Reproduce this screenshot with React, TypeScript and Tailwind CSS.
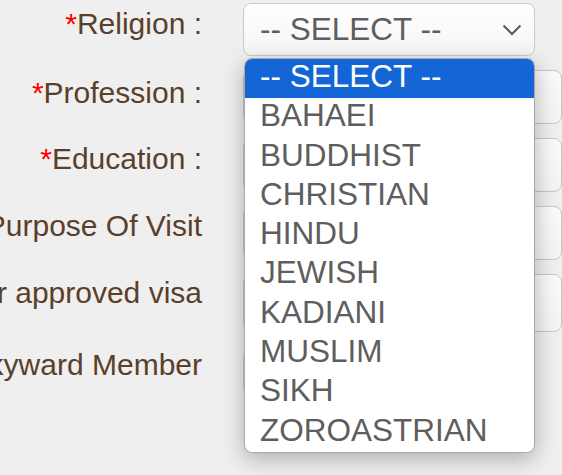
import React from "react";

type Row = {
  label: string;
  required?: boolean;
  labelPt: string;
  height: string;
  width: string;
  kind: "select" | "input" | "short";
};

const rows: Row[] = [
  { label: "Religion :", required: true, labelPt: "pt-[6px]", height: "h-[53px]", width: "w-[292px]", kind: "select" },
  { label: "Profession :", required: true, labelPt: "pt-[8px]", height: "h-[54px]", width: "w-[360px]", kind: "input" },
  { label: "Education :", required: true, labelPt: "pt-[6px]", height: "h-[54px]", width: "w-[360px]", kind: "input" },
  { label: "Purpose Of Visit", labelPt: "pt-[5px]", height: "h-[54px]", width: "w-[360px]", kind: "input" },
  { label: "Prior approved visa", labelPt: "pt-[4px]", height: "h-[58px]", width: "w-[360px]", kind: "input" },
  { label: "Are you a Skyward Member", labelPt: "pt-[2px]", height: "h-[47px]", width: "w-[230px]", kind: "short" },
];

const religions = [
  "-- SELECT --",
  "BAHAEI",
  "BUDDHIST",
  "CHRISTIAN",
  "HINDU",
  "JEWISH",
  "KADIANI",
  "MUSLIM",
  "SIKH",
  "ZOROASTRIAN",
];

function Chevron() {
  return (
    <svg width="20" height="12" viewBox="0 0 20 12" fill="none" className="shrink-0">
      <path d="M1.5 1.5 L10 10 L18.5 1.5" stroke="#5a5a5a" strokeWidth="2" />
    </svg>
  );
}

function Field({ row }: { row: Row }) {
  if (row.kind === "select") {
    return (
      <div
        className={`${row.width} ${row.height} flex items-center justify-between rounded-[8px] border border-[#c9c9c9] bg-gradient-to-b from-white to-[#f5f5f5] pl-[16px] pr-[12px] text-[31.5px] leading-none text-[#5e5e5e]`}
      >
        <span className="pt-[1px]">-- SELECT --</span>
        <Chevron />
      </div>
    );
  }
  return (
    <div
      className={`${row.width} ${row.height} rounded-[8px] border border-[#c6c6c6] bg-gradient-to-b from-[#fafafa] to-[#f3f3f3]`}
    />
  );
}

export default function App() {
  return (
    <div
      className="relative h-[475px] w-[562px] overflow-hidden bg-[#efefef]"
      style={{ fontFamily: '"Liberation Sans", Arial, sans-serif' }}
    >
      <div className="flex flex-col gap-[14px] pt-[3px]">
        {rows.map((row, i) => (
          <div key={row.label} className={`flex gap-[41px] ${i === 5 ? "mt-[2px]" : ""}`}>
            <div className={`flex w-[202px] shrink-0 justify-end ${row.labelPt}`}>
              <span className="whitespace-nowrap text-[30px] leading-[30px] text-[#5a3f2b]">
                {row.required ? <span className="text-[#ff0000]">*</span> : null}
                {row.label}
              </span>
            </div>
            <Field row={row} />
          </div>
        ))}
      </div>

      <div className="absolute left-[244px] top-[58px] w-[291px] overflow-hidden rounded-[8px] border border-[#a9a9a9] bg-white shadow-[0_6px_22px_rgba(0,0,0,0.28)]">
        {religions.map((r, i) => (
          <div
            key={r}
            className={`h-[39.3px] pl-[15px] text-[31.5px] leading-[34px] whitespace-nowrap ${
              i === 0 ? "bg-[#1466d6] text-white" : "text-[#5e5e5e]"
            }`}
          >
            {r}
          </div>
        ))}
      </div>
    </div>
  );
}
